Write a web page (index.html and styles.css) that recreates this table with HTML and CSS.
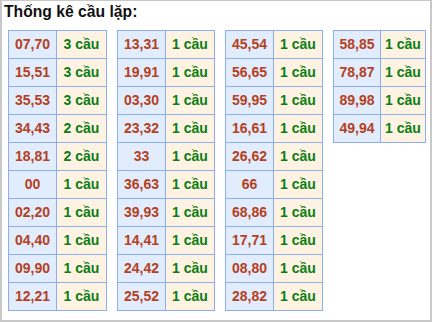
FILE: index.html
```html
<!DOCTYPE html>
<html>
<head>
<meta charset="utf-8">
<link rel="stylesheet" href="styles.css">
</head>
<body>
<div class="box">
  <div class="title">Thống kê cầu lặp:</div>
  <div class="grid">
    <table class="t t1">
      <tr><td class="n">07,70</td><td class="c">3 cầu</td></tr>
      <tr><td class="n">15,51</td><td class="c">3 cầu</td></tr>
      <tr><td class="n">35,53</td><td class="c">3 cầu</td></tr>
      <tr><td class="n">34,43</td><td class="c">2 cầu</td></tr>
      <tr><td class="n">18,81</td><td class="c">2 cầu</td></tr>
      <tr><td class="n">00</td><td class="c">1 cầu</td></tr>
      <tr><td class="n">02,20</td><td class="c">1 cầu</td></tr>
      <tr><td class="n">04,40</td><td class="c">1 cầu</td></tr>
      <tr><td class="n">09,90</td><td class="c">1 cầu</td></tr>
      <tr><td class="n">12,21</td><td class="c">1 cầu</td></tr>
    </table>
    <table class="t t2">
      <tr><td class="n">13,31</td><td class="c">1 cầu</td></tr>
      <tr><td class="n">19,91</td><td class="c">1 cầu</td></tr>
      <tr><td class="n">03,30</td><td class="c">1 cầu</td></tr>
      <tr><td class="n">23,32</td><td class="c">1 cầu</td></tr>
      <tr><td class="n">33</td><td class="c">1 cầu</td></tr>
      <tr><td class="n">36,63</td><td class="c">1 cầu</td></tr>
      <tr><td class="n">39,93</td><td class="c">1 cầu</td></tr>
      <tr><td class="n">14,41</td><td class="c">1 cầu</td></tr>
      <tr><td class="n">24,42</td><td class="c">1 cầu</td></tr>
      <tr><td class="n">25,52</td><td class="c">1 cầu</td></tr>
    </table>
    <table class="t t3">
      <tr><td class="n">45,54</td><td class="c">1 cầu</td></tr>
      <tr><td class="n">56,65</td><td class="c">1 cầu</td></tr>
      <tr><td class="n">59,95</td><td class="c">1 cầu</td></tr>
      <tr><td class="n">16,61</td><td class="c">1 cầu</td></tr>
      <tr><td class="n">26,62</td><td class="c">1 cầu</td></tr>
      <tr><td class="n">66</td><td class="c">1 cầu</td></tr>
      <tr><td class="n">68,86</td><td class="c">1 cầu</td></tr>
      <tr><td class="n">17,71</td><td class="c">1 cầu</td></tr>
      <tr><td class="n">08,80</td><td class="c">1 cầu</td></tr>
      <tr><td class="n">28,82</td><td class="c">1 cầu</td></tr>
    </table>
    <table class="t t4">
      <tr><td class="n">58,85</td><td class="c">1 cầu</td></tr>
      <tr><td class="n">78,87</td><td class="c">1 cầu</td></tr>
      <tr><td class="n">89,98</td><td class="c">1 cầu</td></tr>
      <tr><td class="n">49,94</td><td class="c">1 cầu</td></tr>
    </table>
  </div>
</div>
</body>
</html>
```
FILE: styles.css
```css
html, body {
  margin: 0;
  padding: 0;
  background: #fff;
}
.box {
  width: 432px;
  height: 322px;
  box-sizing: border-box;
  border: 2px solid #c8c8c8;
  border-top-width: 1px;
  padding: 0 0 0 2px;
  overflow: hidden;
  font-family: "Liberation Sans", Arial, sans-serif;
}
.title {
  font-size: 15.7px;
  font-weight: bold;
  color: #111;
  line-height: 20px;
  margin-top: 1px;
}
.grid {
  display: flex;
  align-items: flex-start;
  gap: 10px;
  margin-top: 8px;
  padding-left: 4px;
}
.t {
  border-collapse: separate;
  border-spacing: 0;
  border-top: 1px solid #8caeef;
  border-left: 1px solid #8caeef;
  table-layout: fixed;
  flex: none;
}
.t1 { width: 99px; }
.t2, .t3 { width: 98px; }
.t4 { width: 93px; }
.t td {
  padding: 0;
  height: 27px;
  border-right: 1px solid #8caeef;
  border-bottom: 1px solid #8caeef;
  text-align: center;
  font-size: 14px;
  font-weight: bold;
  line-height: 27px;
  white-space: nowrap;
}
.t td.n {
  width: 47px;
  background: #e1ecfd;
  color: #b4401e;
}
.t4 td.n { width: 46px; }
.t td.c {
  background: #fef3e2;
  color: #0a7d14;
}
```
